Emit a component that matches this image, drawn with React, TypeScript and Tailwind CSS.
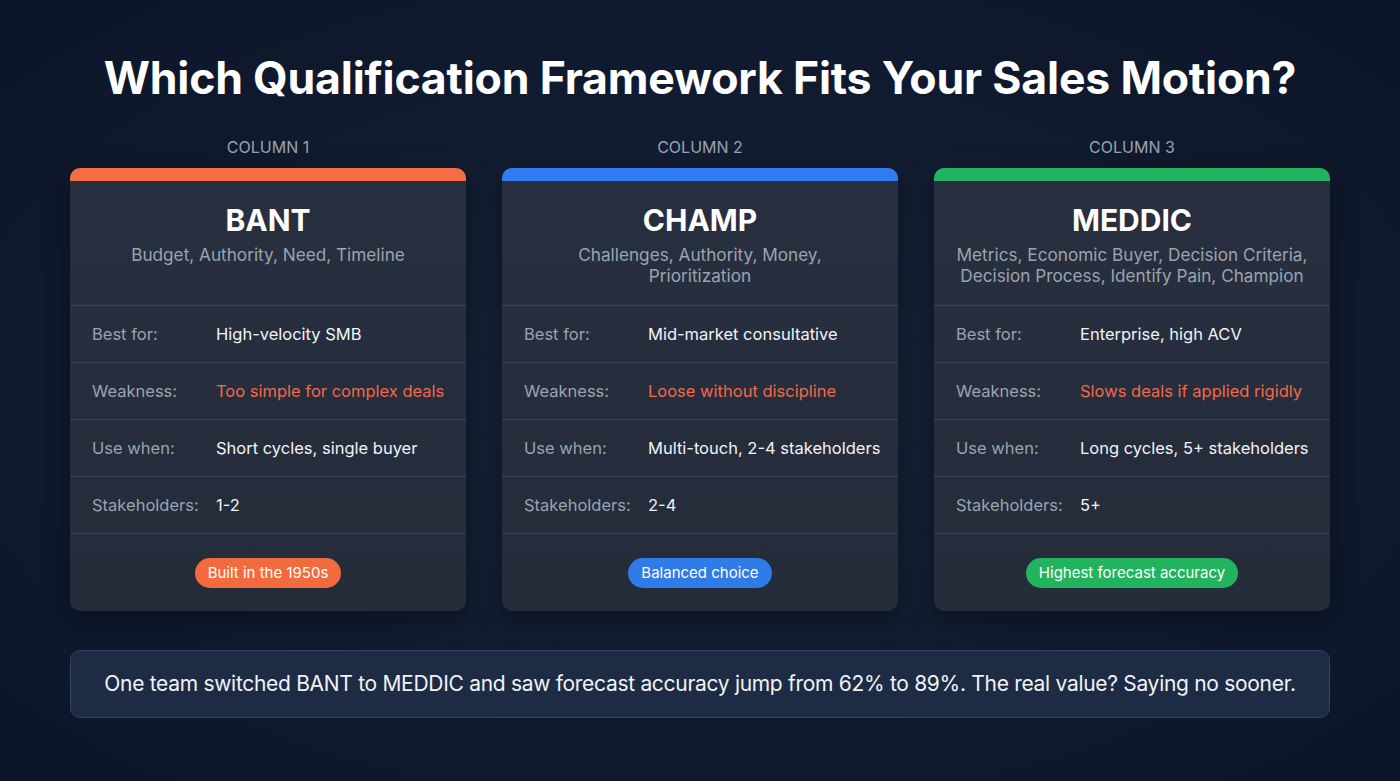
const frameworks = [
  {
    col: "COLUMN 1",
    name: "BANT",
    sub: ["Budget, Authority, Need, Timeline"],
    bar: "bg-[#f46d43]",
    badge: "bg-[#f26b3f]",
    badgeText: "Built in the 1950s",
    best: "High-velocity SMB",
    weak: "Too simple for complex deals",
    use: "Short cycles, single buyer",
    stake: "1-2",
  },
  {
    col: "COLUMN 2",
    name: "CHAMP",
    sub: ["Challenges, Authority, Money,", "Prioritization"],
    bar: "bg-[#2f7cf0]",
    badge: "bg-[#2f7be8]",
    badgeText: "Balanced choice",
    best: "Mid-market consultative",
    weak: "Loose without discipline",
    use: "Multi-touch, 2-4 stakeholders",
    stake: "2-4",
  },
  {
    col: "COLUMN 3",
    name: "MEDDIC",
    sub: ["Metrics, Economic Buyer, Decision Criteria,", "Decision Process, Identify Pain, Champion"],
    bar: "bg-[#22b35e]",
    badge: "bg-[#22b35e]",
    badgeText: "Highest forecast accuracy",
    best: "Enterprise, high ACV",
    weak: "Slows deals if applied rigidly",
    use: "Long cycles, 5+ stakeholders",
    stake: "5+",
  },
];

function Row({ label, value, warn }: { label: string; value: string; warn?: boolean }) {
  return (
    <div className="flex h-[57px] items-center border-b border-[#3a4352] px-[22px] text-[16.5px] whitespace-nowrap">
      <span className="w-[124px] shrink-0 text-[#9aa3b0]">{label}</span>
      <span className={warn ? "text-[#f0694a]" : "text-[#f1f3f6]"}>{value}</span>
    </div>
  );
}

export default function App() {
  return (
    <div
      className="flex h-[781px] w-[1400px] flex-col items-center bg-[radial-gradient(ellipse_at_center,#172338_0%,#101a2e_60%,#0c1528_100%)] px-[70px] pt-[51px]"
      style={{ fontFamily: "Inter, 'Noto Sans', sans-serif" }}
    >
      <h1 className="text-[44.6px] font-bold leading-[54px] tracking-[-0.2px] text-white">
        Which Qualification Framework Fits Your Sales Motion?
      </h1>

      <div className="mt-[32px] grid w-full grid-cols-3 gap-[36px]">
        {frameworks.map((f) => (
          <div key={f.name} className="flex flex-col">
            <div className="mb-[11px] text-center text-[16px] leading-[20px] text-[#9aa3b0]">{f.col}</div>
            <div className="overflow-hidden rounded-[10px] bg-[linear-gradient(180deg,#283040_0%,#242b39_100%)] shadow-[0_8px_24px_rgba(0,0,0,0.35)]">
              <div className={`h-[13px] ${f.bar}`} />
              <div className="flex h-[125px] flex-col items-center border-b border-[#3a4352] pt-[21px]">
                <div className="text-[30px] font-bold leading-[36px] text-white">{f.name}</div>
                <div className="mt-[6px] text-center text-[17.2px] leading-[21px] text-[#9aa3b0]">
                  {f.sub.map((s) => (
                    <div key={s}>{s}</div>
                  ))}
                </div>
              </div>
              <Row label="Best for:" value={f.best} />
              <Row label="Weakness:" value={f.weak} warn />
              <Row label="Use when:" value={f.use} />
              <Row label="Stakeholders:" value={f.stake} />
              <div className="flex h-[77px] items-center justify-center">
                <span className={`rounded-full px-[13px] py-[5px] text-[15px] leading-[20px] text-white ${f.badge}`}>
                  {f.badgeText}
                </span>
              </div>
            </div>
          </div>
        ))}
      </div>

      <div className="mt-[39px] flex h-[68px] w-full items-center justify-center rounded-[10px] border border-[#34456a] bg-[#1e2b45] text-[21px] tracking-[-0.3px] whitespace-nowrap text-[#f1f3f6]">
        One team switched BANT to MEDDIC and saw forecast accuracy jump from 62% to 89%. The real value? Saying no sooner.
      </div>
    </div>
  );
}
